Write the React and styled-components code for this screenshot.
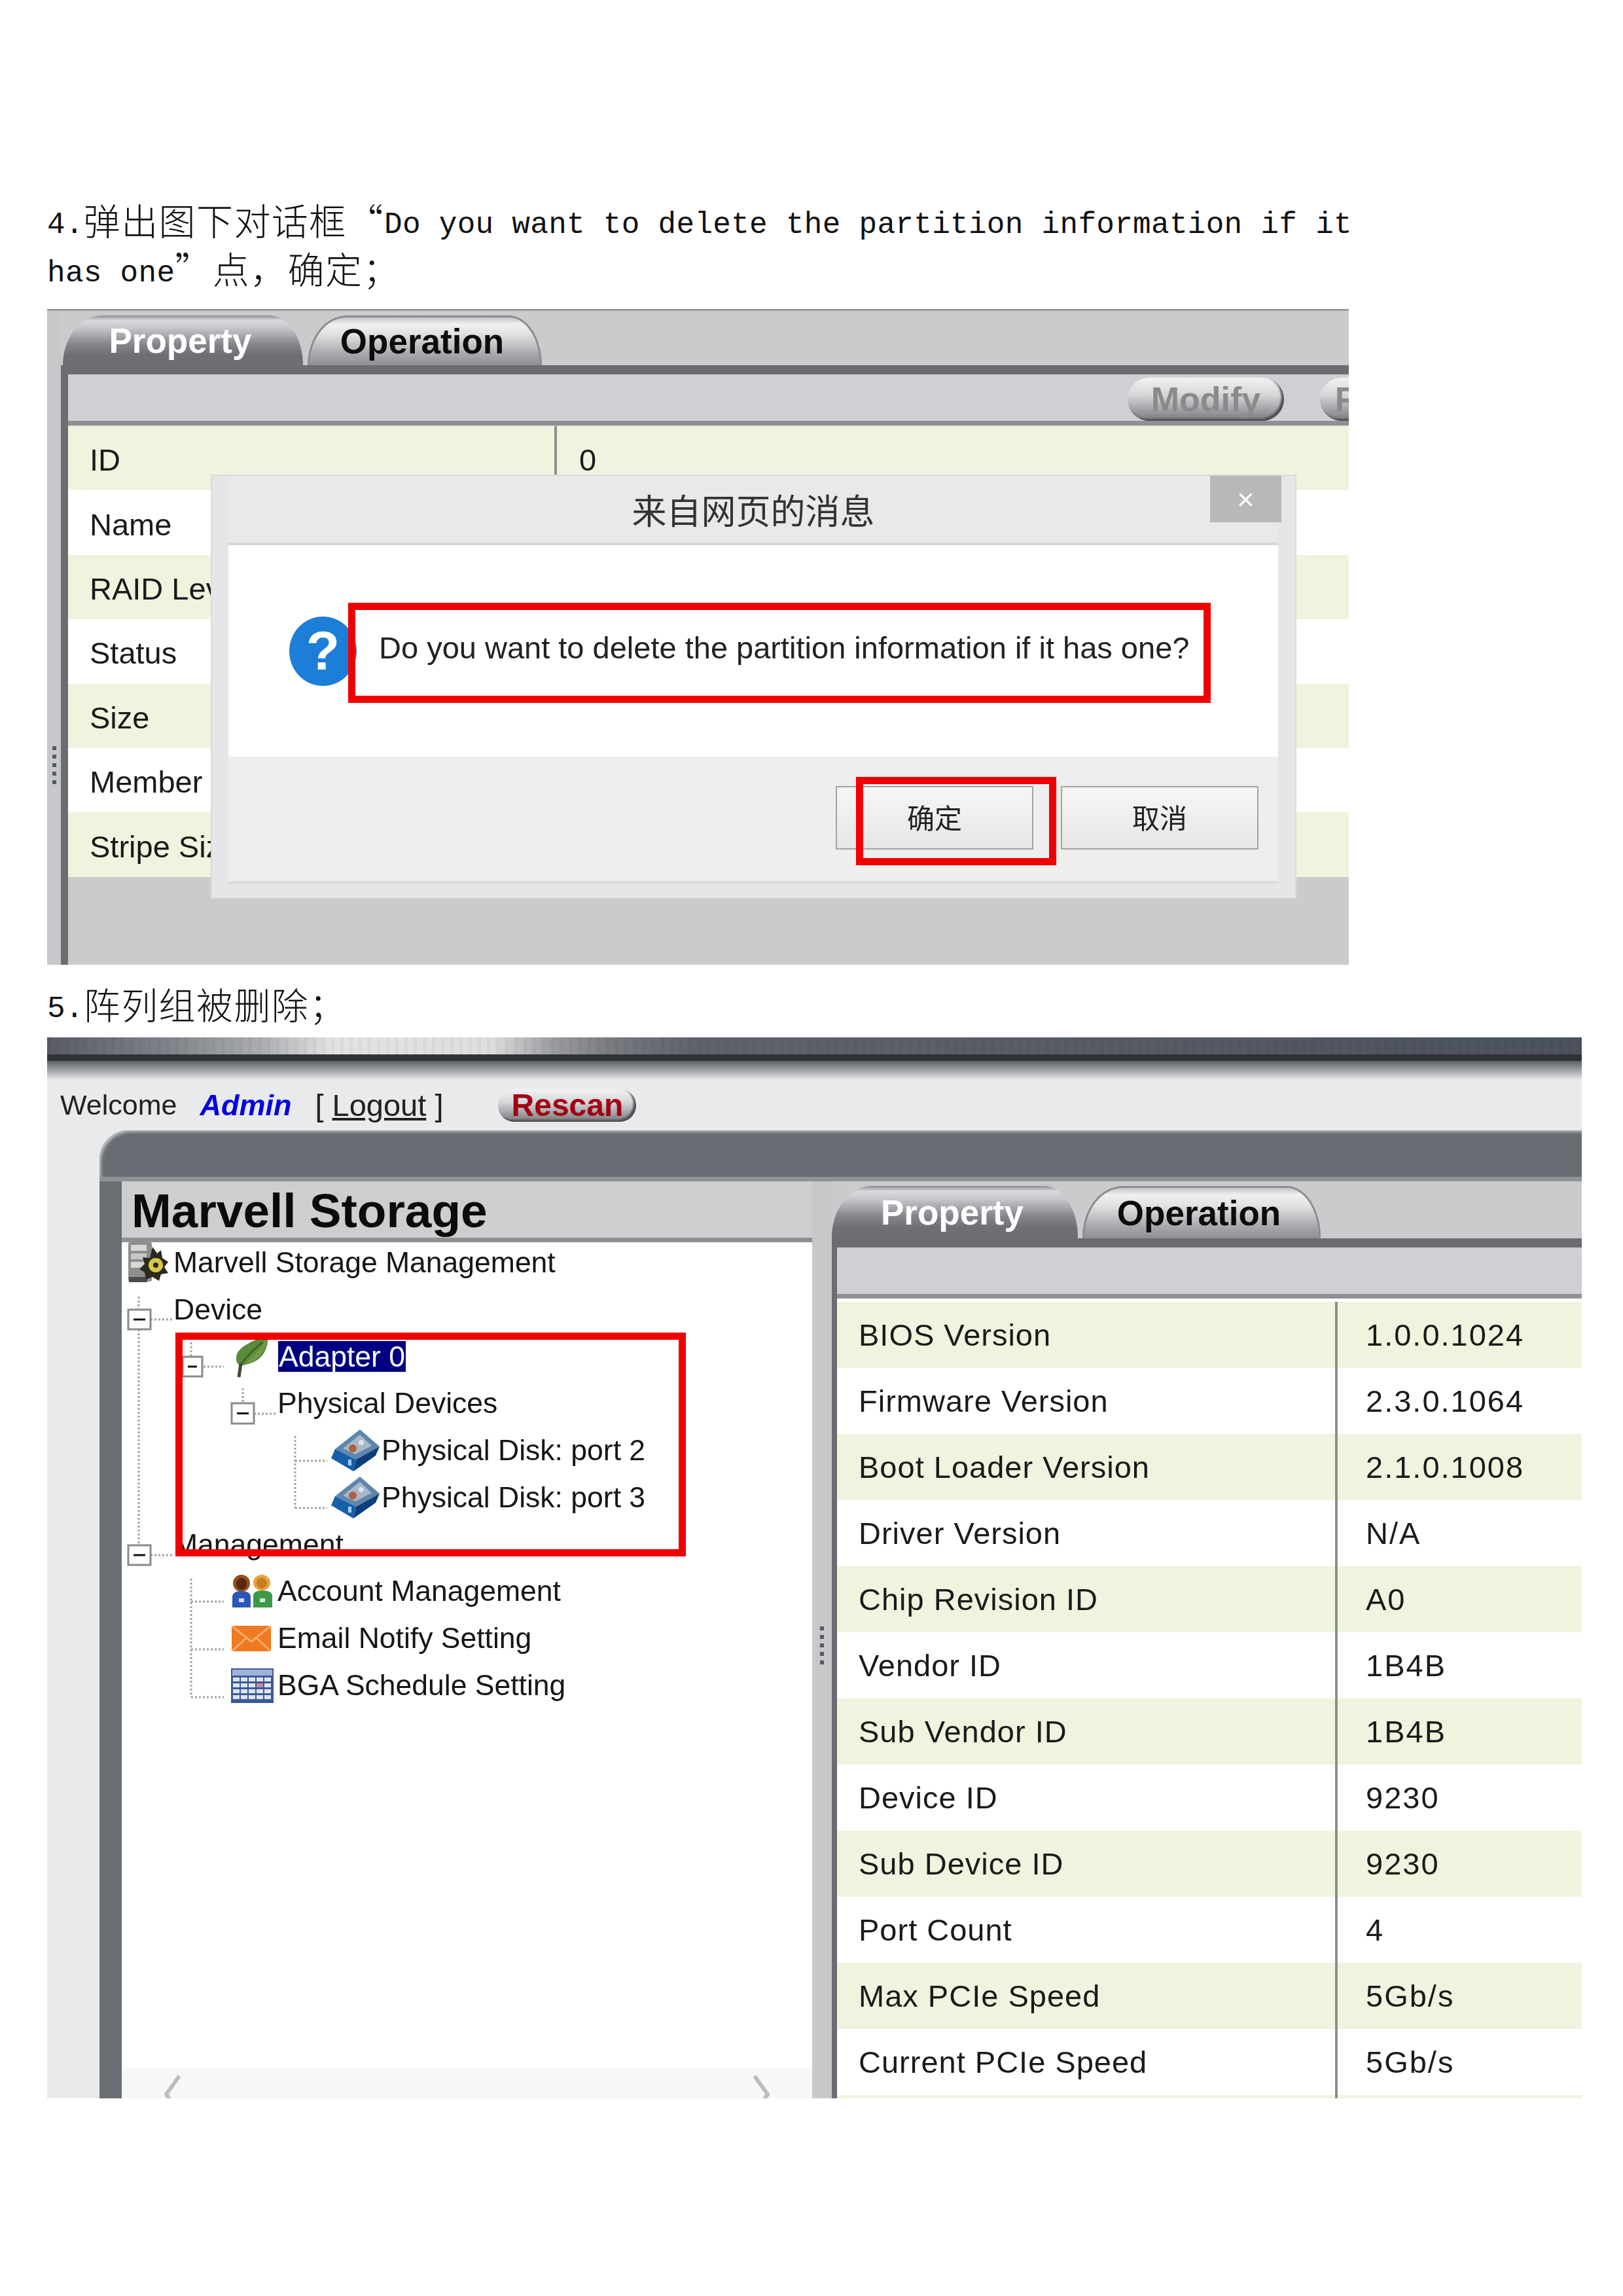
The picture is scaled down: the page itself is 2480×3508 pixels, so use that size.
import React from "react";
import styled, { createGlobalStyle } from "styled-components";

const GlobalStyle = createGlobalStyle`
  html, body {
    margin: 0;
    background: #fff;
  }
`;

const Page = styled.div`
  box-sizing: border-box;
  width: 2480px;
  height: 3508px;
  padding: 300px 63px 0 72px;
  background: #fff;
  color: #111;
  font-family: "Liberation Sans", "Noto Sans CJK SC", sans-serif;
`;

const DocLine = styled.div`
  height: 74px;
  line-height: 70px;
  white-space: nowrap;
  font-family: "Noto Sans CJK SC", sans-serif;
  font-size: 56px;
  font-weight: 300;
  letter-spacing: 1.4px;
  margin-top: ${(p) => p.$top || 0}px;
`;

const Latin = styled.span`
  font-family: "Liberation Mono", "Noto Sans CJK SC", monospace;
  font-size: 46px;
  font-weight: 400;
  letter-spacing: 0.3px;
  vertical-align: 3px;
`;

const Shot = styled.div`
  position: relative;
  display: flex;
  box-sizing: border-box;
  width: ${(p) => p.$w}px;
  height: ${(p) => p.$h}px;
  margin-top: ${(p) => p.$top}px;
  overflow: hidden;
  filter: blur(0.7px);
`;

const PropertyShot = styled(Shot)`
  border-top: 3px solid #9a9a9a;
  background: #cacbcd;
`;

const StorageShot = styled(Shot)`
  flex-direction: column;
  background: #e8eaec;
`;

const Highlight = styled.div`
  position: absolute;
  box-sizing: border-box;
  left: ${(p) => p.$x}px;
  top: ${(p) => p.$y}px;
  width: ${(p) => p.$w}px;
  height: ${(p) => p.$h}px;
  border: 11px solid #f00000;
  z-index: 5;
`;

/* ---- shared detail pane ---- */

const Gutter = styled.div`
  flex: 0 0 ${(p) => p.$w}px;
  display: flex;
  justify-content: center;
  box-sizing: border-box;
  padding-top: ${(p) => p.$gripTop}px;
  background: #c6c8ca;
`;

const Grip = styled.div`
  display: flex;
  flex-direction: column;
  gap: 7px;
  height: max-content;
`;

const GripDot = styled.span`
  width: 6px;
  height: 6px;
  background: #565a60;
`;

const Detail = styled.div`
  flex: 1;
  min-width: 0;
  display: flex;
  flex-direction: column;
`;

const TabStrip = styled.div`
  flex: 0 0 ${(p) => p.$h}px;
  display: flex;
  align-items: flex-end;
  gap: 7px;
  padding-left: ${(p) => p.$inset}px;
  background: #cacbcd;
`;

const Tab = styled.div`
  box-sizing: border-box;
  width: ${(p) => p.$w}px;
  height: ${(p) => p.$h}px;
  display: flex;
  align-items: center;
  justify-content: center;
  padding-right: 8px;
  font-size: 53px;
  font-weight: 700;
  border-radius: 62px 52px 0 0 / 78px 78px 0 0;
`;

const ActiveTab = styled(Tab)`
  color: #fff;
  background: linear-gradient(#8d8e93 0, #d9dadc 10%, #c4c5c9 26%, #85868c 58%, #6e6f75 80%);
`;

const IdleTab = styled(Tab)`
  color: #0c0c0c;
  border: solid #8c8d90;
  border-width: 3px 3px 0 3px;
  background: linear-gradient(#c2c3c5 0, #f0f0f0 14%, #e2e2e3 35%, #a9aaae 75%, #8f9095 100%);
`;

const DarkBar = styled.div`
  flex: 0 0 14px;
  background: #6c6d72;
`;

const DetailBody = styled.div`
  flex: 1;
  border-left: ${(p) => p.$rail}px solid #6c6d72;
  background: ${(p) => p.$bg};
`;

const Toolbar = styled.div`
  display: flex;
  align-items: flex-end;
  box-sizing: content-box;
  height: 71px;
  padding-left: ${(p) => p.$inset || 0}px;
  gap: 55px;
  overflow: hidden;
  background: #cfd0d3;
  border-bottom: 7px solid #8f9093;
`;

const Pill = styled.div`
  flex: 0 0 auto;
  box-sizing: border-box;
  display: flex;
  align-items: center;
  justify-content: center;
  height: ${(p) => p.$h}px;
  width: ${(p) => p.$w}px;
  border-radius: ${(p) => p.$h / 2}px;
  font-size: ${(p) => p.$size}px;
  font-weight: 700;
  color: ${(p) => p.$color};
  background: linear-gradient(#f2f2f3 0, #d6d7d9 40%, #8f9093 85%, #77787b 100%);
  box-shadow: inset -4px -3px 3px #4f5053;
`;

const InfoRows = styled.div`
  padding-top: ${(p) => p.$top}px;
`;

const InfoRow = styled.div`
  display: grid;
  grid-template-columns: ${(p) => p.$label}px 1fr;
  height: ${(p) => p.$h}px;
  box-sizing: border-box;
  background: ${(p) => (p.$shade ? "#eef4de" : "#fff")};
  font-size: 47px;
`;

const InfoLabel = styled.div`
  display: flex;
  align-items: center;
  padding: ${(p) => p.$shift || 0}px 0 0 33px;
  white-space: nowrap;
  letter-spacing: ${(p) => p.$track || 0}px;
  color: #1a1a1a;
`;

const InfoValue = styled.div`
  display: flex;
  align-items: center;
  padding: ${(p) => p.$shift || 0}px 0 0 ${(p) => p.$pad}px;
  border-left: 4px solid #8d8f8b;
  letter-spacing: 2px;
  color: #1a1a1a;
`;

/* ---- dialog ---- */

const Dialog = styled.div`
  position: absolute;
  box-sizing: border-box;
  left: 250px;
  top: 250px;
  width: 1659px;
  height: 648px;
  padding: 0 26px 21px 25px;
  display: flex;
  flex-direction: column;
  background: #e5e6e8;
  border: 2px solid #dcdcdc;
  z-index: 3;
`;

const DialogTitle = styled.div`
  flex: 0 0 106px;
  display: flex;
  align-items: center;
  justify-content: center;
  box-sizing: border-box;
  font-size: 53px;
  color: #333;
  background: #e9e9ea;
  border-bottom: 4px solid #d8d8d9;
`;

const CloseButton = styled.div`
  position: absolute;
  top: 0;
  right: 21px;
  width: 109px;
  height: 71px;
  display: flex;
  align-items: center;
  justify-content: center;
  color: #fff;
  font-size: 46px;
  background: #b7b8b9;
`;

const DialogBody = styled.div`
  flex: 0 0 323px;
  display: flex;
  align-items: center;
  padding-left: 93px;
  background: #fff;
`;

const Question = styled.div`
  flex: 0 0 103px;
  height: 106px;
  border-radius: 50%;
  display: flex;
  align-items: center;
  justify-content: center;
  background: #1c7ed6;
  color: #fff;
  font-size: 84px;
  font-weight: 700;
`;

const DialogText = styled.div`
  margin-left: 34px;
  margin-bottom: 10px;
  font-size: 47px;
  white-space: nowrap;
  color: #222;
`;

const DialogFooter = styled.div`
  flex: 1;
  display: flex;
  justify-content: flex-end;
  gap: 42px;
  padding: 45px 30px 0 0;
  background: #eeeeee;
  border-bottom: 4px solid #dcdcdc;
`;

const DialogButton = styled.div`
  box-sizing: border-box;
  width: 302px;
  height: 97px;
  padding-bottom: 5px;
  display: flex;
  align-items: center;
  justify-content: center;
  font-size: 42px;
  color: #222;
  border: 2px solid #a3a3a3;
  background: linear-gradient(#f6f6f6, #e6e6e6);
`;

/* ---- storage window ---- */

const ChromeBar = styled.div`
  flex: 0 0 26px;
  background:
    repeating-linear-gradient(90deg, rgba(0, 0, 0, 0.035) 0 5px, transparent 5px 14px),
    linear-gradient(90deg, #585b62 0, #81848a 8%, #abadb0 14%, #e2e3e3 18.5%, #dedede 29%, #9a9ca0 33%, #77797f 37%, #5f636b 42%, #4c525e 100%);
  border-bottom: 10px solid #2f3237;
`;

const ChromeFade = styled.div`
  flex: 0 0 29px;
  background: linear-gradient(#5c6066, #a9abae 55%, #e8eaec);
`;

const WelcomeRow = styled.div`
  flex: 0 0 77px;
  display: flex;
  align-items: center;
  padding-left: 20px;
  white-space: nowrap;
`;

const Welcome = styled.span`
  font-size: 43px;
  color: #222;
`;

const Admin = styled.span`
  margin-left: 35px;
  font-size: 45px;
  font-weight: 700;
  font-style: italic;
  color: #0000e0;
`;

const LogoutGroup = styled.span`
  margin-left: 36px;
  font-size: 47px;
  color: #222;
`;

const LogoutLink = styled.span`
  text-decoration: underline;
`;

const RescanSlot = styled.div`
  margin-left: 84px;
`;

const Frame = styled.div`
  flex: 1;
  min-height: 0;
  margin-left: 80px;
  padding-top: 71px;
  display: flex;
  flex-direction: column;
  background: #676c72;
  border-top-left-radius: 44px;
  box-shadow: inset 5px 5px 5px -3px #c4c7ca;
`;

const FrameBody = styled.div`
  flex: 1;
  min-height: 0;
  display: flex;
  padding-left: 34px;
  border-top: 7px solid #8f9296;
  background: #6a6e73;
`;

const TreePane = styled.div`
  flex: 0 0 1055px;
  display: flex;
  flex-direction: column;
`;

const TreeHeader = styled.div`
  flex: 0 0 90px;
  display: flex;
  align-items: center;
  padding: 3px 0 0 15px;
  box-sizing: border-box;
  font-size: 73px;
  font-weight: 700;
  color: #0b0b0b;
  background: #cdced0;
  border-bottom: 7px solid #8f9093;
`;

const Tree = styled.div`
  position: relative;
  flex: 1;
  min-height: 0;
  overflow: hidden;
  background: #fff;
`;

const TreeLines = styled.svg`
  position: absolute;
  left: 0;
  top: 0;
`;

const TreeList = styled.div`
  position: relative;
  margin-top: -5px;
`;

const TreeRow = styled.div`
  display: flex;
  align-items: center;
  height: 71.8px;
  padding-left: ${(p) => p.$indent}px;
  gap: ${(p) => p.$gap || 0}px;
  font-size: 44.5px;
  white-space: nowrap;
  color: #161616;
`;

const Selected = styled.span`
  padding: 0 1px;
  height: 47px;
  line-height: 47px;
  background: #000080;
  color: #fff;
`;

const ScrollStrip = styled.div`
  flex: 0 0 36px;
  display: flex;
  justify-content: space-between;
  padding: 10px 62px 0 62px;
  overflow: hidden;
  background: #f7f7f7;
`;

/* ---- drawings ---- */

const ServerIcon = () => (
  <svg width="66" height="63" viewBox="0 0 66 63">
    <rect x="3" y="1" width="36" height="60" rx="3" fill="#8e8f8c" />
    <rect x="7" y="5" width="24" height="9" fill="#d8d8d6" />
    <rect x="7" y="18" width="24" height="9" fill="#c6c6c4" />
    <rect x="7" y="31" width="24" height="9" fill="#d8d8d6" />
    <rect x="4" y="54" width="28" height="8" fill="#4b4b4b" />
    <path d="M40 8l7 10 6-5 2 12 9 6-6 8 6 9-11 2-3 10-10-6-10 4-2-11-8-5 8-8-3-10 11 1z" fill="#2b2a1c" />
    <circle cx="45" cy="36" r="11" fill="#d8c64a" />
    <circle cx="45" cy="36" r="4" fill="#2b2a1c" />
  </svg>
);

const LeafIcon = () => (
  <svg width="52" height="66" viewBox="0 0 52 66">
    <path d="M51 1C30 8 4 18 2 34c-1 10 4 14 10 13C38 42 50 30 51 1z" fill="#5d8a3a" />
    <path d="M51 1C48 26 36 40 12 47c14-12 28-26 39-46z" fill="#6f9a47" />
    <path d="M42 12C30 22 18 32 9 46" stroke="#41692a" strokeWidth="3" fill="none" />
    <path d="M9 44L6 65" stroke="#3c4a34" strokeWidth="5" fill="none" />
  </svg>
);

const DiskIcon = () => (
  <svg width="74" height="64" viewBox="0 0 74 64">
    <polygon points="44,0 74,26 38,46 6,30" fill="#5f86ad" />
    <polygon points="44,8 62,25 37,38 18,29" fill="#a9b7c8" />
    <polygon points="6,30 38,46 34,64 0,44" fill="#1560a8" />
    <polygon points="38,46 74,26 68,40 34,64" fill="#0e3f78" />
    <circle cx="33" cy="29" r="6" fill="#b0603c" />
    <circle cx="46" cy="20" r="4" fill="#dfe4ea" />
    <rect x="26" y="46" width="5" height="9" fill="#9fd0ea" />
  </svg>
);

const PeopleIcon = () => (
  <svg width="64" height="50" viewBox="0 0 64 50">
    <ellipse cx="16" cy="13" rx="13" ry="13" fill="#9c4b1c" />
    <ellipse cx="16" cy="14" rx="8" ry="9" fill="#54280e" />
    <ellipse cx="47" cy="12" rx="13" ry="12" fill="#eba13c" />
    <ellipse cx="47" cy="13" rx="8" ry="8" fill="#c77c22" />
    <path d="M2 50V34c0-6 5-9 14-9s14 3 14 9v16z" fill="#2a58b8" />
    <path d="M34 50V32c0-5 5-8 14-8s15 3 15 8v18z" fill="#3a9a48" />
    <rect x="12" y="36" width="8" height="6" fill="#cfd8f0" />
    <rect x="44" y="36" width="8" height="6" fill="#cdeccf" />
  </svg>
);

const MailIcon = () => (
  <svg width="62" height="41" viewBox="0 0 62 41">
    <rect x="1" y="1" width="60" height="39" rx="2" fill="#ef7a20" />
    <path d="M2 2L31 25L60 2M2 39L24 19M60 39L38 19" stroke="#f8ad6e" strokeWidth="3" fill="none" />
  </svg>
);

const CalendarIcon = () => (
  <svg width="65" height="53" viewBox="0 0 65 53">
    <rect x="0" y="0" width="65" height="53" fill="#3d5a98" />
    <rect x="2" y="2" width="61" height="9" fill="#9db2d8" />
    {[14, 23, 32, 41].map((y) =>
      [3, 15, 27, 39, 51].map((x) => (
        <rect key={`${x}-${y}`} x={x} y={y} width="10" height="6" fill={y === 23 && x === 39 ? "#c88a9a" : "#dfe6f2"} />
      ))
    )}
  </svg>
);

const ExpanderBox = ({ x, y, w = 32, h = 30 }) => (
  <g>
    <rect x={x} y={y} width={w} height={h} fill="#fff" stroke="#8a8a8a" strokeWidth="3" />
    <line x1={x + 8} x2={x + w - 8} y1={y + h / 2} y2={y + h / 2} stroke="#111" strokeWidth="3" />
  </g>
);

const dotted = [
  [212, 1985, 212, 2005],
  [212, 2035, 212, 2365],
  [230, 2020, 265, 2020],
  [292, 2055, 292, 2077],
  [311, 2092, 342, 2092],
  [371, 2125, 371, 2148],
  [388, 2164, 424, 2164],
  [451, 2198, 451, 2308],
  [451, 2236, 500, 2236],
  [451, 2308, 500, 2308],
  [230, 2380, 265, 2380],
  [292, 2416, 292, 2597],
  [292, 2451, 342, 2451],
  [292, 2524, 342, 2524],
  [292, 2597, 342, 2597],
];

const TreeConnectors = () => (
  <TreeLines width="1055" height="1270" viewBox="186 1902 1055 1270">
    {dotted.map(([x1, y1, x2, y2]) => (
      <line key={`${x1}-${y1}-${y2}`} x1={x1} y1={y1} x2={x2} y2={y2} stroke="#a2a2a2" strokeWidth="3" strokeDasharray="3 3" />
    ))}
    <ExpanderBox x={196} y={2005} w={34} />
    <ExpanderBox x={279} y={2077} w={30} />
    <ExpanderBox x={354} y={2148} w={34} h={31} />
    <ExpanderBox x={196} y={2365} w={34} />
  </TreeLines>
);

const GripDots = () => (
  <Grip>
    {[0, 1, 2, 3, 4].map((i) => (
      <GripDot key={i} />
    ))}
  </Grip>
);

const Tabs = ({ height, inset, activeW, idleW, tabH }) => (
  <TabStrip $h={height} $inset={inset}>
    <ActiveTab $w={activeW} $h={tabH}>Property</ActiveTab>
    <IdleTab $w={idleW} $h={tabH}>Operation</IdleTab>
  </TabStrip>
);

const raidRows = [
  ["ID", "0"],
  ["Name", ""],
  ["RAID Level", ""],
  ["Status", ""],
  ["Size", ""],
  ["Member", ""],
  ["Stripe Size", ""],
];

const adapterRows = [
  ["BIOS Version", "1.0.0.1024"],
  ["Firmware Version", "2.3.0.1064"],
  ["Boot Loader Version", "2.1.0.1008"],
  ["Driver Version", "N/A"],
  ["Chip Revision ID", "A0"],
  ["Vendor ID", "1B4B"],
  ["Sub Vendor ID", "1B4B"],
  ["Device ID", "9230"],
  ["Sub Device ID", "9230"],
  ["Port Count", "4"],
  ["Max PCIe Speed", "5Gb/s"],
  ["Current PCIe Speed", "5Gb/s"],
  ["", ""],
];

const App = () => (
  <Page>
    <GlobalStyle />
    <DocLine>
      <Latin>4.</Latin>弹出图下对话框“<Latin>Do you want to delete the partition information if it</Latin>
    </DocLine>
    <DocLine>
      <Latin>has one</Latin>”点，确定；
    </DocLine>

    <PropertyShot $w={1989} $h={1002} $top={24}>
      <Gutter $w={21} $gripTop={665}>
        <GripDots />
      </Gutter>
      <Detail>
        <Tabs height={83} inset={3} activeW={367} idleW={358} tabH={76} />
        <DarkBar />
        <DetailBody $rail={11} $bg="#cbcbcb">
          <Toolbar $inset={1619}>
            <Pill $w={239} $h={66} $size={52} $color="#8a8a8c">Modify</Pill>
            <Pill $w={239} $h={66} $size={52} $color="#8a8a8c">Refresh</Pill>
          </Toolbar>
          <InfoRows $top={1}>
            {raidRows.map(([label, value], i) => (
              <InfoRow key={label} $label={743} $h={98.4} $shade={i % 2 === 0}>
                <InfoLabel $shift={5}>{label}</InfoLabel>
                <InfoValue $shift={5} $pad={34}>{value}</InfoValue>
              </InfoRow>
            ))}
          </InfoRows>
        </DetailBody>
      </Detail>
      <Dialog>
        <DialogTitle>来自网页的消息</DialogTitle>
        <CloseButton>×</CloseButton>
        <DialogBody>
          <Question>?</Question>
          <DialogText>Do you want to delete the partition information if it has one?</DialogText>
        </DialogBody>
        <DialogFooter>
          <DialogButton>确定</DialogButton>
          <DialogButton>取消</DialogButton>
        </DialogFooter>
      </Dialog>
      <Highlight $x={460} $y={446} $w={1318} $h={153} />
      <Highlight $x={1236} $y={712} $w={306} $h={135} />
    </PropertyShot>

    <DocLine $top={24}>
      <Latin>5.</Latin>阵列组被删除；
    </DocLine>

    <StorageShot $w={2345} $h={1621} $top={13}>
      <ChromeBar />
      <ChromeFade />
      <WelcomeRow>
        <Welcome>Welcome</Welcome>
        <Admin>Admin</Admin>
        <LogoutGroup>
          [ <LogoutLink>Logout</LogoutLink> ]
        </LogoutGroup>
        <RescanSlot>
          <Pill $w={211} $h={50} $size={48} $color="#a00012">Rescan</Pill>
        </RescanSlot>
      </WelcomeRow>
      <Frame>
        <FrameBody>
          <TreePane>
            <TreeHeader>Marvell Storage</TreeHeader>
            <Tree>
              <TreeConnectors />
              <TreeList>
                <TreeRow $indent={7} $gap={6}>
                  <ServerIcon />
                  Marvell Storage Management
                </TreeRow>
                <TreeRow $indent={79}>Device</TreeRow>
                <TreeRow $indent={173} $gap={14}>
                  <LeafIcon />
                  <Selected>Adapter 0</Selected>
                </TreeRow>
                <TreeRow $indent={238}>Physical Devices</TreeRow>
                <TreeRow $indent={320} $gap={3}>
                  <DiskIcon />
                  Physical Disk: port 2
                </TreeRow>
                <TreeRow $indent={320} $gap={3}>
                  <DiskIcon />
                  Physical Disk: port 3
                </TreeRow>
                <TreeRow $indent={79}>Management</TreeRow>
                <TreeRow $indent={167} $gap={7}>
                  <PeopleIcon />
                  Account Management
                </TreeRow>
                <TreeRow $indent={167} $gap={9}>
                  <MailIcon />
                  Email Notify Setting
                </TreeRow>
                <TreeRow $indent={167} $gap={6}>
                  <CalendarIcon />
                  BGA Schedule Setting
                </TreeRow>
              </TreeList>
            </Tree>
            <ScrollStrip>
              <svg width="30" height="60" viewBox="0 0 30 60">
                <path d="M26 2L6 30L26 58" stroke="#bdbdbd" strokeWidth="6" fill="none" />
              </svg>
              <svg width="30" height="60" viewBox="0 0 30 60">
                <path d="M4 2L24 30L4 58" stroke="#bdbdbd" strokeWidth="6" fill="none" />
              </svg>
            </ScrollStrip>
          </TreePane>
          <Gutter $w={30} $gripTop={680}>
            <GripDots />
          </Gutter>
          <Detail>
            <Tabs height={87} inset={0} activeW={376} idleW={364} tabH={80} />
            <DarkBar />
            <DetailBody $rail={8} $bg="#fff">
              <Toolbar />
              <InfoRows $top={5}>
                {adapterRows.map(([label, value], i) => (
                  <InfoRow key={label} $label={761} $h={101} $shade={i % 2 === 0}>
                    <InfoLabel $track={1}>{label}</InfoLabel>
                    <InfoValue $pad={43}>{value}</InfoValue>
                  </InfoRow>
                ))}
              </InfoRows>
            </DetailBody>
          </Detail>
        </FrameBody>
      </Frame>
      <Highlight $x={196} $y={451} $w={780} $h={342} />
    </StorageShot>
  </Page>
);

export default App;
